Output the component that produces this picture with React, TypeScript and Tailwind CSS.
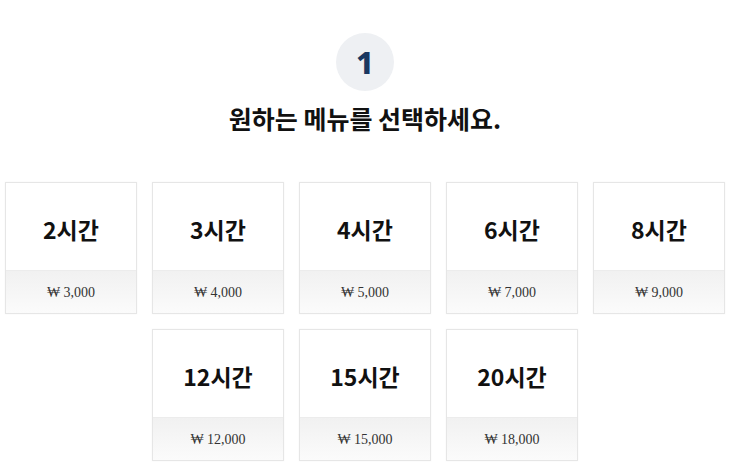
import React from "react";

const row1 = [
  ["2시간", "₩ 3,000"],
  ["3시간", "₩ 4,000"],
  ["4시간", "₩ 5,000"],
  ["6시간", "₩ 7,000"],
  ["8시간", "₩ 9,000"],
];
const row2 = [
  ["12시간", "₩ 12,000"],
  ["15시간", "₩ 15,000"],
  ["20시간", "₩ 18,000"],
];

function Card({ t, p }: { t: string; p: string }) {
  return (
    <div className="w-[132px] h-[132px] border border-[#e6e6e6] bg-white flex flex-col shadow-[0_0_2px_rgba(0,0,0,0.04)]">
      <div className="h-[87px] flex items-center justify-center pt-[6px] text-[23px] font-bold text-[#111] [font-family:'Noto_Sans_CJK_KR','Noto_Sans',sans-serif]">
        {t}
      </div>
      <div className="flex-1 border-t border-[#ececec] bg-gradient-to-b from-[#f1f1f1] to-[#fbfbfb] flex items-center justify-center text-[14px] text-[#333] [font-family:'Liberation_Serif','Noto_Sans_CJK_KR',serif]">
        {p}
      </div>
    </div>
  );
}

export default function App() {
  return (
    <div className="w-[750px] h-[475px] bg-white overflow-hidden [font-family:'Noto_Sans_CJK_KR',sans-serif]">
      <div className="w-[730px] flex flex-col items-center pt-[33px]">
        <div className="w-[58px] h-[58px] rounded-full bg-[#eef0f3] flex items-center justify-center text-[31px] font-extrabold text-[#1a3760] [font-family:'Noto_Sans','Noto_Sans_CJK_KR',sans-serif]">
          1
        </div>
        <div className="mt-[10px] text-[25px] font-bold text-[#111] leading-[34px]">원하는 메뉴를 선택하세요.</div>
      </div>
      <div className="mt-[47px] pl-[5px] flex flex-col gap-[15px]">
        <div className="flex gap-[15px]">
          {row1.map(([t, p]) => (
            <Card key={t} t={t} p={p} />
          ))}
        </div>
        <div className="flex gap-[15px] pl-[147px]">
          {row2.map(([t, p]) => (
            <Card key={t} t={t} p={p} />
          ))}
        </div>
      </div>
    </div>
  );
}
